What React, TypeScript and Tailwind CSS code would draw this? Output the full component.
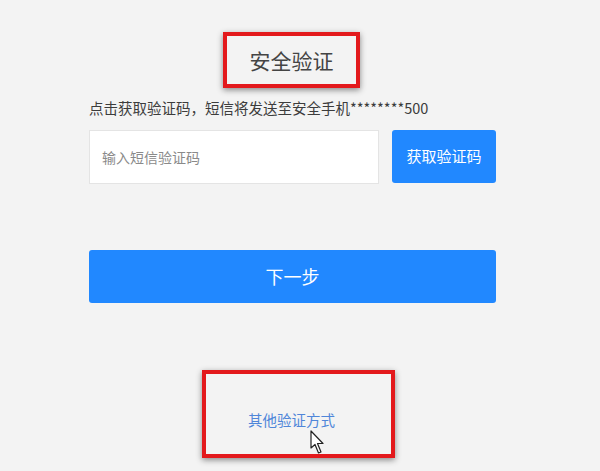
import React from "react";

const font = { fontFamily: '"Noto Sans CJK SC", "Noto Sans", sans-serif' };

function Cursor() {
  return (
    <svg
      className="absolute left-[104px] top-[56px]"
      width="14"
      height="25"
      viewBox="0 0 14 25"
      fill="none"
    >
      <path
        d="M1 1 L1 18 L5 14.5 L8.5 23 L11 22 L7.5 13.5 L13 13.5 Z"
        fill="#ffffff"
        stroke="#222222"
        strokeWidth="1.2"
        strokeLinejoin="round"
      />
    </svg>
  );
}

export default function App() {
  return (
    <div className="w-[600px] h-[471px] bg-[#f3f3f3] overflow-hidden" style={font}>
      <div className="ml-[89px] w-[407px] flex flex-col">
        <div className="mt-[32px] self-center ml-[-2px] w-[137px] h-[56px] border-4 border-[#e3191c] shadow-[0_2px_6px_rgba(0,0,0,0.45)] flex items-center justify-center">
          <span className="text-[21px] text-[#444] leading-none">安全验证</span>
        </div>

        <p className="mt-[10px] text-[14.5px] leading-[20px] text-[#3c3c3c] whitespace-nowrap">
          点击获取验证码，短信将发送至安全手机********500
        </p>

        <div className="mt-[12px] flex gap-[13px]">
          <div className="w-[290px] h-[54px] bg-white border border-[#e4e4e4] flex items-center pl-[12px]">
            <span className="text-[14px] text-[#8a8a8a]">输入短信验证码</span>
          </div>
          <button className="w-[104px] h-[53px] rounded-[3px] bg-[#2188ff] text-white text-[15px] flex items-center justify-center">
            获取验证码
          </button>
        </div>

        <button className="mt-[66px] h-[53px] w-full rounded-[3px] bg-[#2188ff] text-white text-[18px] flex items-center justify-center">
          下一步
        </button>

        <div className="relative mt-[67px] ml-[113px] w-[193px] h-[88px] border-4 border-[#e3191c] shadow-[0_2px_6px_rgba(0,0,0,0.45)]">
          <span className="absolute left-[42px] top-[37px] text-[14.5px] leading-[18px] text-[#4f86d9] whitespace-nowrap">
            其他验证方式
          </span>
          <Cursor />
        </div>
      </div>
    </div>
  );
}
